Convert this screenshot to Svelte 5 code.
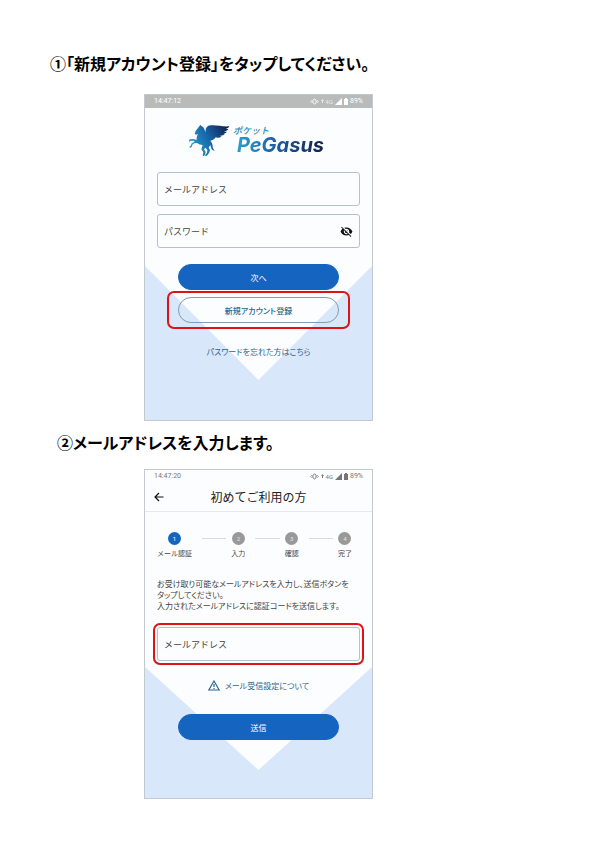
<script lang="ts">
	const steps = ['メール認証', '入力', '確認', '完了'];

	let loginEmail = $state('');
	let password = $state('');
	let showPassword = $state(false);
	let signupEmail = $state('');
</script>

{#snippet statusBar(time: string, light: boolean)}
	<div class="status-bar" class:light>
		<span>{time}</span>
		<span class="status-icons">
			<svg width="9" height="7" viewBox="0 0 11 8" fill="none" stroke="currentColor" aria-hidden="true">
				<path d="M3.5 2.5 5.5 1l2 1.5v3L5.5 7l-2-1.5z" stroke-width="1.2" />
				<path d="M2 2.5 .8 4 2 5.5M9 2.5 10.2 4 9 5.5" stroke-width="1" />
			</svg>
			<svg class="arrow" width="3" height="8" viewBox="0 0 3 8" fill="currentColor" aria-hidden="true">
				<path d="M1.5 1 3 3H2v2H1V3H0z" />
			</svg>
			<span class="network">4G</span>
			<svg width="7" height="7" viewBox="0 0 8 8" fill="currentColor" aria-hidden="true">
				<path d="M8 0v8H0z" />
			</svg>
			<svg width="4" height="7" viewBox="0 0 4 7" fill="currentColor" aria-hidden="true">
				<path d="M1 0h2v1h1v6H0V1h1z" />
			</svg>
			<span>89%</span>
		</span>
	</div>
{/snippet}

<main class="guide">
	<section>
		<h2>①「新規アカウント登録」をタップしてください。</h2>
		<div class="phone login">
			{@render statusBar('14:47:12', true)}
			<div class="logo">
				<svg width="43" height="32" viewBox="0 0 129 96" aria-hidden="true">
					<defs>
						<linearGradient id="horse" x1="0" y1="0.6" x2="1" y2="0.2">
							<stop offset="0" stop-color="#2aa5cf" />
							<stop offset="0.5" stop-color="#1765a8" />
							<stop offset="1" stop-color="#12204f" />
						</linearGradient>
					</defs>
					<path
						fill="url(#horse)"
						d="M31 7l3-5 3 4c6 2 9 7 10 13l3 6C48 14 53 5 65 4c16-2 36 5 56 3-2 4-6 7-11 8l8 0c-3 5-8 7-14 8l10 0c-4 5-9 7-15 7l8 1c-4 4-10 5-15 4l6 3c-6 3-13 4-18 2-3 6-9 9-16 10 4 5 7 10 7 17 0 6 2 10 6 12-5 2-11-2-11-9l-2-7c-1 3-3 5-5 7l4 9-3 8-6 8-6 2 2-6 4-5 1-8-6-7-4 5 5 8-2 8-5 6-2-4 2-9-6-9 4-13c-6 0-12-2-17-6l-8 1-5 3-3 8-5 3-2-4 4-3 3-7 9-5-3-3-7 0-5 2-3 5-4 0-1-4 5-2 3-5 11-1 10 3c-1-7 1-13 4-18l-6 2-4-3 3-8z"
					/>
				</svg>
				<div class="wordmark">
					<span class="kana">ポケット</span>
					<span class="latin">PeGasus</span>
				</div>
			</div>
			<form class="login-form" onsubmit={(e) => e.preventDefault()}>
				<label class="field">
					<span>メールアドレス</span>
					<input type="email" bind:value={loginEmail} />
				</label>
				<div class="field">
					<label for="password">パスワード</label>
					<input id="password" type={showPassword ? 'text' : 'password'} bind:value={password} />
					<button
						type="button"
						class="icon-button"
						aria-label="パスワードを表示"
						onclick={() => (showPassword = !showPassword)}
					>
						<svg width="13" height="13" viewBox="0 0 24 24" fill="currentColor" aria-hidden="true">
							<path
								d="M12 7c2.76 0 5 2.24 5 5 0 .65-.13 1.26-.36 1.83l2.92 2.92c1.51-1.26 2.7-2.89 3.43-4.75-1.73-4.39-6-7.5-11-7.5-1.4 0-2.74.25-3.98.7l2.16 2.16C10.74 7.13 11.35 7 12 7zM2 4.27l2.28 2.28.46.46C3.08 8.3 1.78 10.02 1 12c1.73 4.39 6 7.5 11 7.5 1.55 0 3.03-.3 4.38-.84l.42.42L19.73 22 21 20.73 3.27 3 2 4.27zM7.53 9.8l1.55 1.55c-.05.21-.08.43-.08.65 0 1.66 1.34 3 3 3 .22 0 .44-.03.65-.08l1.55 1.55c-.67.33-1.41.53-2.2.53-2.76 0-5-2.24-5-5 0-.79.2-1.53.53-2.2zm4.31-.78l3.15 3.15.02-.16c0-1.66-1.34-3-3-3l-.17.01z"
							/>
						</svg>
					</button>
				</div>
				<button type="submit" class="pill primary">次へ</button>
				<div class="marked marked-pill">
					<button type="button" class="pill outlined">新規アカウント登録</button>
				</div>
			</form>
			<a class="forgot" href="#reset">パスワードを忘れた方はこちら</a>
		</div>
	</section>

	<section>
		<h2 class="second">②メールアドレスを入力します。</h2>
		<div class="phone signup">
			{@render statusBar('14:47:20', false)}
			<header class="app-bar">
				<button type="button" class="icon-button" aria-label="戻る">
					<svg width="10" height="10" viewBox="0 0 10 10" fill="none" stroke="currentColor" aria-hidden="true">
						<path d="M9.5 5H1M5 1 1 5l4 4" stroke-width="1.2" />
					</svg>
				</button>
				<h3>初めてご利用の方</h3>
			</header>
			<ol class="steps">
				{#each steps as step, i}
					<li class:active={i === 0}>
						<span class="dot">{i + 1}</span>
						<span class="step-name">{step}</span>
					</li>
				{/each}
			</ol>
			<p class="intro">
				お受け取り可能なメールアドレスを入力し、送信ボタンを<br />タップしてください。<br />
				入力されたメールアドレスに認証コードを送信します。
			</p>
			<form class="signup-form" onsubmit={(e) => e.preventDefault()}>
				<div class="marked marked-field">
					<label class="field">
						<span>メールアドレス</span>
						<input type="email" bind:value={signupEmail} />
					</label>
				</div>
				<a class="about" href="#mail-settings">
					<svg width="12" height="11" viewBox="0 0 12 11" fill="none" stroke="currentColor" aria-hidden="true">
						<path d="M6 1 11.2 10H.8z" stroke-width="1.2" />
						<path d="M6 4v3M6 8v1" stroke-width="1.2" />
					</svg>
					メール受信設定について
				</a>
				<button type="submit" class="pill primary">送信</button>
			</form>
		</div>
	</section>
</main>

<style>
	:global(body) {
		margin: 0;
		background: #fff;
	}

	.guide {
		padding: 50px 0;
		font-family: 'Noto Sans CJK JP', sans-serif;
		color: #444;
	}

	h2 {
		margin: 0 0 18px;
		padding-left: 50px;
		font-size: 16px;
		line-height: 26px;
		font-weight: 700;
		font-feature-settings: 'palt';
		color: #000;
	}
	h2.second {
		margin-top: 8px;
		margin-bottom: 14px;
		padding-left: 57px;
	}

	.phone {
		position: relative;
		z-index: 0;
		box-sizing: border-box;
		width: 38%;
		min-width: 229px;
		margin-left: 24%;
		border: 1px solid #c4c8cf;
		background: #fcfdff;
		font-size: 8px;
		line-height: 11px;
	}
	/* pale blue envelope fold behind the screen content */
	.phone::before {
		content: '';
		position: absolute;
		z-index: -1;
		inset: auto 0 0;
		height: 154px;
		background: #d9e7fa;
		clip-path: polygon(0 0, 50% 114px, 100% 0, 100% 100%, 0 100%);
	}
	.phone.signup::before {
		height: 131px;
		clip-path: polygon(0 0, 50% 103px, 100% 0, 100% 100%, 0 100%);
	}

	.status-bar {
		display: flex;
		justify-content: space-between;
		align-items: center;
		height: 13px;
		padding: 0 9px;
		font-family: Roboto, sans-serif;
		font-size: 7px;
		line-height: 13px;
		color: #777;
	}
	.status-bar.light {
		background: #b9bbbb;
		color: #fff;
	}
	.status-icons {
		display: flex;
		align-items: center;
		gap: 2px;
	}
	.network {
		font-size: 6px;
	}
	.light .arrow,
	.light .network {
		opacity: 0.7;
	}

	.logo {
		display: flex;
		justify-content: center;
		align-items: center;
		gap: 1px;
		margin-top: 14px;
		height: 36px;
	}
	.wordmark {
		display: flex;
		flex-direction: column;
	}
	.kana {
		font-size: 9px;
		line-height: 9px;
		font-weight: 500;
		font-style: italic;
		color: #2c8aa9;
	}
	.latin {
		padding: 0 4px;
		font-family: Inter, sans-serif;
		font-size: 20px;
		line-height: 20px;
		font-weight: 700;
		font-style: italic;
		background: linear-gradient(90deg, #2aa5cf, #1b579c 50%, #131c40);
		background-clip: text;
		-webkit-background-clip: text;
		color: transparent;
	}

	form {
		display: flex;
		flex-direction: column;
		padding: 0 12px;
	}
	.login-form {
		margin-top: 14px;
	}

	.field {
		display: flex;
		align-items: center;
		box-sizing: border-box;
		height: 34px;
		padding: 0 6px;
		border: 1px solid #afc3cd;
		border-radius: 3px;
		background: #fcfdff;
		font-size: 9px;
		color: #444;
	}
	.field + .field {
		margin-top: 8px;
	}
	.field input {
		flex: 1;
		min-width: 0;
		padding: 0 4px;
		border: none;
		outline: none;
		background: none;
		font: inherit;
	}

	.icon-button {
		display: flex;
		padding: 0;
		border: none;
		background: none;
		color: #111;
		cursor: pointer;
	}

	.pill {
		display: block;
		box-sizing: border-box;
		width: 161px;
		height: 26px;
		padding: 0;
		margin: 0 auto;
		border: 1px solid #1565c0;
		border-radius: 13px;
		font: inherit;
		cursor: pointer;
	}
	.primary {
		background: #1565c0;
		color: #fff;
	}
	.outlined {
		border-color: #7d9db2;
		background: none;
		color: #2b668d;
		font-weight: 500;
		font-feature-settings: 'palt';
	}
	.login-form .primary {
		margin-top: 16px;
	}

	.marked {
		position: relative;
	}
	.marked::after {
		content: '';
		position: absolute;
		border: 2px solid #dc1418;
		border-radius: 7px;
		pointer-events: none;
	}
	.marked-pill {
		width: 161px;
		margin: 7px auto 0;
	}
	.marked-pill::after {
		inset: -6px -11px;
	}
	.marked-field::after {
		inset: -4px;
	}

	.forgot {
		display: block;
		margin-top: 23px;
		padding-bottom: 63px;
		text-align: center;
		font-feature-settings: 'palt';
		color: #2b668d;
		text-decoration: none;
	}

	.app-bar {
		display: grid;
		grid-template-columns: 10px 1fr 10px;
		align-items: center;
		height: 28px;
		padding: 0 9px;
		border-bottom: 1px solid #e6e8eb;
	}
	h3 {
		margin: 0;
		text-align: center;
		font-size: 12px;
		line-height: 18px;
		font-weight: 400;
		color: #222;
	}

	.steps {
		display: flex;
		list-style: none;
		margin: 20px 20px 0 12px;
		padding: 0;
	}
	.steps li {
		display: grid;
		grid-template-columns: 1fr auto;
		flex: 1;
		justify-items: center;
		row-gap: 3px;
	}
	.steps li::before {
		content: '';
		justify-self: stretch;
		align-self: center;
		height: 1px;
		margin: 0 5px 0 10px;
		background: #d9dbde;
	}
	.steps li:first-child {
		flex: none;
		grid-template-columns: auto;
	}
	.steps li:first-child::before {
		display: none;
	}
	.dot {
		width: 13px;
		height: 13px;
		border-radius: 50%;
		background: #999;
		color: #e4e4e4;
		font-family: Roboto, sans-serif;
		font-size: 6px;
		line-height: 13px;
		text-align: center;
	}
	.active .dot {
		background: #1565c0;
		color: #fff;
	}
	.step-name {
		grid-column: -2;
		font-size: 7px;
		line-height: 10px;
		white-space: nowrap;
	}

	.intro {
		margin: 20px 12px 0;
		font-feature-settings: 'palt';
		white-space: nowrap;
	}
	.signup-form {
		margin-top: 16px;
		padding-bottom: 58px;
	}
	.about {
		display: flex;
		justify-content: center;
		align-items: center;
		gap: 5px;
		margin: 19px 0 23px;
		font-feature-settings: 'palt';
		color: #2b668d;
		text-decoration: none;
	}
</style>
